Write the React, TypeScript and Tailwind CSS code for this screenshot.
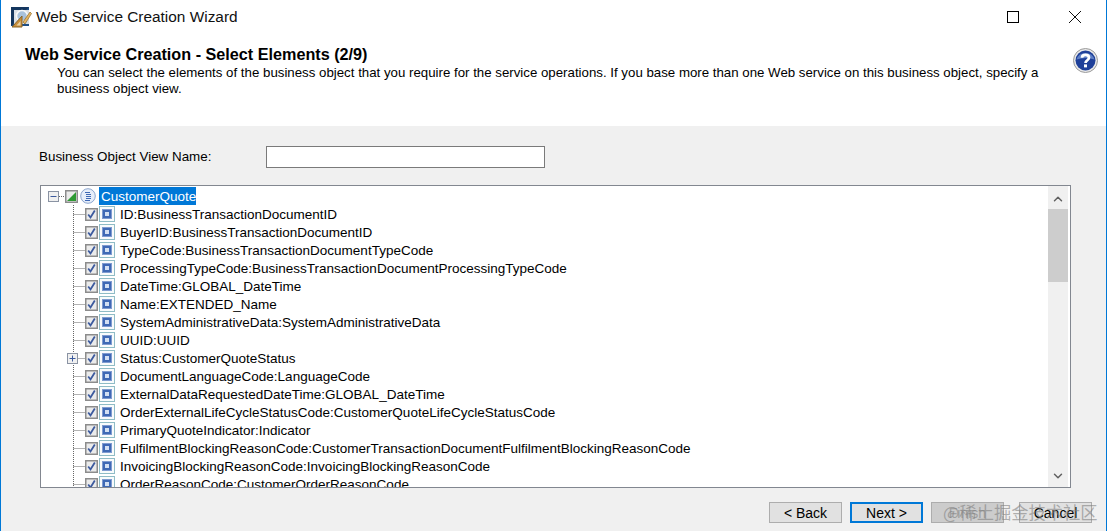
import React from 'react'
import { ChevronDown, ChevronUp } from 'lucide-react'

const fields = [
	'ID:BusinessTransactionDocumentID',
	'BuyerID:BusinessTransactionDocumentID',
	'TypeCode:BusinessTransactionDocumentTypeCode',
	'ProcessingTypeCode:BusinessTransactionDocumentProcessingTypeCode',
	'DateTime:GLOBAL_DateTime',
	'Name:EXTENDED_Name',
	'SystemAdministrativeData:SystemAdministrativeData',
	'UUID:UUID',
	'Status:CustomerQuoteStatus',
	'DocumentLanguageCode:LanguageCode',
	'ExternalDataRequestedDateTime:GLOBAL_DateTime',
	'OrderExternalLifeCycleStatusCode:CustomerQuoteLifeCycleStatusCode',
	'PrimaryQuoteIndicator:Indicator',
	'FulfilmentBlockingReasonCode:CustomerTransactionDocumentFulfilmentBlockingReasonCode',
	'InvoicingBlockingReasonCode:InvoicingBlockingReasonCode',
	'OrderReasonCode:CustomerOrderReasonCode',
]

const AppIcon = () => (
	<svg width="22" height="22" viewBox="0 0 22 22">
		<rect x="1" y="1" width="18" height="19" fill="#1f4f86" />
		<path d="M1 20 V1 H19 L16 4 H4 V17 Z" fill="#14365e" />
		<rect x="4" y="4" width="15" height="14" fill="#d9dfe6" />
		<circle cx="12" cy="10" r="5.5" fill="#a8c2dc" stroke="#f6f8fa" strokeWidth="1.6" />
		<path d="M2 21 L12 10 L12 21 Z" fill="#c98f3c" stroke="#8a6426" strokeWidth="1" />
		<path d="M6.5 19.5 L10.5 15 L10.5 19.5 Z" fill="#e8d3a8" />
		<path d="M13 16 L20 6 L21.5 7.5 L15 18 Z" fill="#e6b560" stroke="#8c6a2c" strokeWidth="0.7" />
	</svg>
)

const HelpIcon = () => (
	<svg width="25" height="25" viewBox="0 0 25 25">
		<circle cx="12.5" cy="12.5" r="12" fill="#e9e9e9" stroke="#9a9a9a" />
		<circle cx="12.5" cy="12.5" r="10" fill="#1f4099" />
		<path d="M3.5 11.5 A9.5 9.5 0 0 1 21.5 11.5 Q12.5 8.5 3.5 11.5 Z" fill="#5f80c6" />
		<path d="M9 9.8 C9 6 16 6 16 9.8 C16 12.3 12.5 12.2 12.5 15" fill="none" stroke="#ffffff" strokeWidth="2.7" />
		<rect x="11" y="16.4" width="3" height="3" fill="#ffffff" />
	</svg>
)

const CheckBox = ({ partial }: { partial?: boolean }) => (
	<svg width="13" height="13" viewBox="0 0 13 13" className="shrink-0">
		<rect x="0.75" y="0.75" width="11.5" height="11.5" fill="#ebebeb" stroke="#8c8c8c" strokeWidth="1.5" />
		{partial ? (
			<path d="M2 11 L11 2 L11 11 Z" fill="#2e9a33" />
		) : (
			<path d="M3.2 6.5 L5.5 9.5 L9.8 2.5" fill="none" stroke="#3c5a9e" strokeWidth="1.8" />
		)}
	</svg>
)

const FieldIcon = () => (
	<svg width="16" height="16" viewBox="0 0 16 16" className="shrink-0">
		<rect x="0.5" y="0.5" width="15" height="15" fill="#f8fbfc" stroke="#8fbcc6" />
		<rect x="3.5" y="3.5" width="9" height="9" fill="#3f69b5" stroke="#7f9bd0" strokeWidth="1" />
		<rect x="6" y="6" width="4" height="4" fill="#d3e0f3" />
	</svg>
)

const RootIcon = () => (
	<svg width="16" height="16" viewBox="0 0 16 16" className="shrink-0">
		<circle cx="8" cy="8" r="7.3" fill="#e6eefa" stroke="#8ca6cf" />
		<path d="M5 4.5 H10 M6 6.5 H11 M6 8.5 H11 M6 10.5 H11 M5 12.5 H10" stroke="#3f69b5" strokeWidth="1" />
	</svg>
)

const Expander = ({ open }: { open?: boolean }) => (
	<svg width="11" height="11" viewBox="0 0 11 11" className="shrink-0">
		<rect x="0.5" y="0.5" width="10" height="10" fill="#f0f0f0" stroke="#8a93a3" />
		<path d="M2.5 5.5 H8.5" stroke="#3c5a9e" />
		{!open && <path d="M5.5 2.5 V8.5" stroke="#3c5a9e" />}
	</svg>
)

// dotted tree guide, one per row
const Guide = ({ hasExpander }: { hasExpander?: boolean }) => (
	<div className="relative w-[12px] h-[18px] shrink-0">
		<svg width="12" height="18" viewBox="0 0 12 18">
			<path d="M0.5 0 V18 M0.5 9.5 H12" stroke="#666666" strokeDasharray="1 1" fill="none" />
		</svg>
		{hasExpander && (
			<div className="absolute left-[-6px] top-[4px] flex">
				<Expander />
			</div>
		)}
	</div>
)

const WizardButton = ({ label, primary, disabled }: { label: string; primary?: boolean; disabled?: boolean }) => (
	<button
		className={`w-[73px] h-[21px] text-[14px] leading-none text-center ${
			primary ? 'border-2 border-[#0078d7]' : 'border border-[#adadad]'
		} ${disabled ? 'bg-[#cccccc] text-[#a0a0a0]' : 'bg-[#e1e1e1] text-black'}`}
	>
		{label}
	</button>
)

export default function App() {
	return (
		<div className="w-[1107px] h-[531px] overflow-hidden relative flex flex-col bg-white border-x border-[#0078d7] font-['Liberation_Sans',sans-serif] text-black">
			{/* title bar */}
			<div className="h-[33px] shrink-0 flex items-center">
				<div className="ml-[9px] mr-[4px] flex">
					<AppIcon />
				</div>
				<span className="text-[15.4px] text-[#111111]">Web Service Creation Wizard</span>
				<div className="ml-auto flex items-center">
					<div className="w-[12px] h-[12px] border border-black mr-[49px]"></div>
					<svg width="14" height="14" viewBox="0 0 14 14" className="mr-[24px]">
						<path d="M1 1 L13 13 M13 1 L1 13" stroke="#111111" />
					</svg>
				</div>
			</div>

			{/* header */}
			<div className="h-[93px] shrink-0 relative pl-[24px] pt-[13px]">
				<h1 className="text-[16.2px] leading-[17px] font-bold">Web Service Creation - Select Elements (2/9)</h1>
				<p className="ml-[32px] w-[1000px] text-[13.27px] leading-[16px] mt-[2px]">
					You can select the elements of the business object that you require for the service operations. If you base more than one Web service on this business object, specify a business object view.
				</p>
				<div className="absolute right-[8px] top-[15px] flex">
					<HelpIcon />
				</div>
			</div>

			{/* body */}
			<div className="flex-1 bg-[#f0f0f0] flex flex-col pl-[38px] pr-[14px] min-h-0">
				<div className="flex items-center mt-[20px] h-[22px]">
					<label className="w-[227px] text-[13.4px]">Business Object View Name:</label>
					<input className="w-[279px] h-[22px] border border-[#7a7a7a] bg-white" />
				</div>

				<div className="mt-[17px] ml-[1px] h-[303px] w-[1031px] border border-[#828790] bg-white flex overflow-hidden">
					<div className="flex-1 min-w-0 overflow-hidden pt-[1px] text-[13.5px]">
						<div className="h-[18px] flex items-center pl-[7px]">
							<Expander open />
							<svg width="6" height="18" viewBox="0 0 6 18"><path d="M0 9.5 H6" stroke="#666666" strokeDasharray="1 1" /></svg>
							<CheckBox partial />
							<div className="w-[2px]"></div>
							<RootIcon />
							<span className="ml-[3px] h-[18px] w-[97px] bg-[#0078d7] text-white pl-[2px] pt-[1px] leading-[18px]">CustomerQuote</span>
						</div>
						{fields.map((f) => (
							<div key={f} className="h-[18px] flex items-center pl-[32px] whitespace-nowrap">
								<Guide hasExpander={f.startsWith('Status:')} />
								<CheckBox />
								<div className="w-[1px]"></div>
								<FieldIcon />
								<span className="ml-[5px] pt-[2px]">{f}</span>
							</div>
						))}
					</div>
					<div className="w-[20px] mr-[2px] shrink-0 bg-[#f0f0f0] flex flex-col">
						<div className="h-[23px] flex items-center justify-center pt-[3px]">
							<ChevronUp size={14} strokeWidth={2.5} className="text-[#606060]" />
						</div>
						<div className="h-[73px] bg-[#cdcdcd]"></div>
						<div className="flex-1"></div>
						<div className="h-[23px] flex items-center justify-center">
							<ChevronDown size={14} strokeWidth={2.5} className="text-[#606060]" />
						</div>
					</div>
				</div>

				<div className="mt-[14px] flex justify-end">
					<WizardButton label="< Back" />
					<div className="w-[8px]"></div>
					<WizardButton label="Next >" primary />
					<div className="w-[8px]"></div>
					<WizardButton label="Finish" disabled />
					<div className="w-[15px]"></div>
					<WizardButton label="Cancel" />
				</div>
			</div>

			{/* watermark */}
			<div className="absolute left-[942px] top-[500px] text-[17.3px] leading-[24px] text-[#80808099] whitespace-nowrap font-['Noto_Sans_CJK_SC',sans-serif]">
				@稀土掘金技术社区
			</div>
		</div>
	)
}
